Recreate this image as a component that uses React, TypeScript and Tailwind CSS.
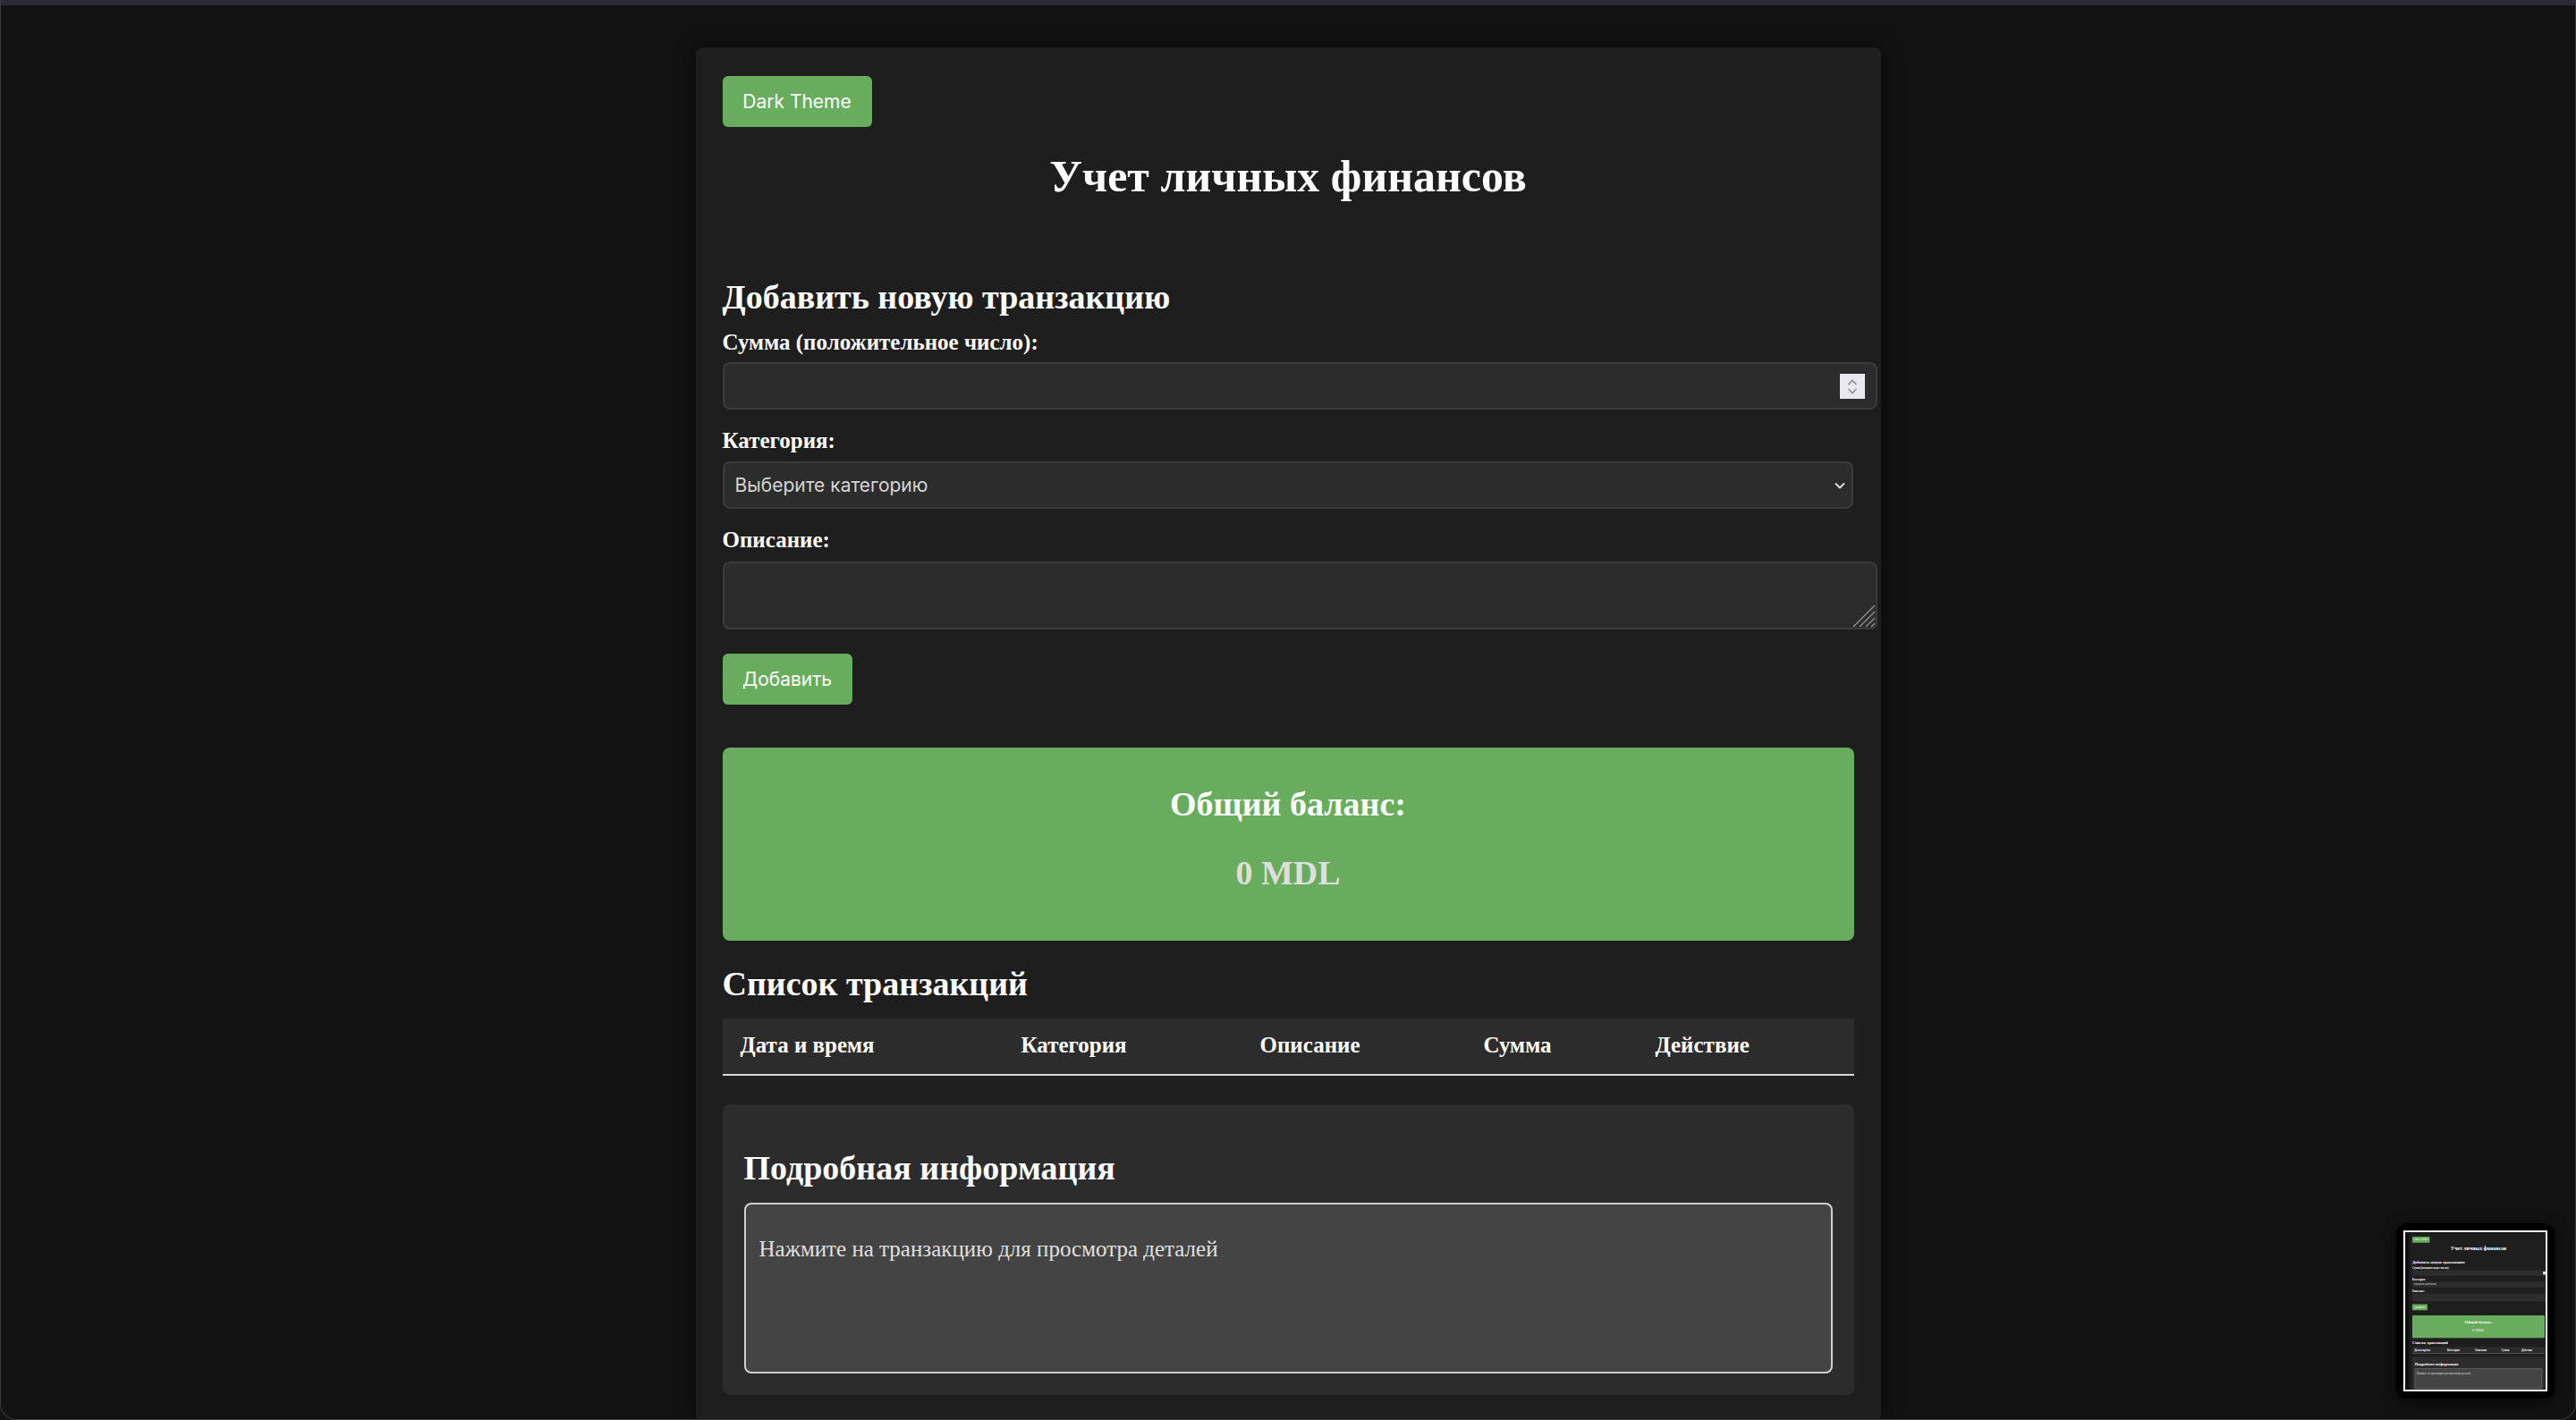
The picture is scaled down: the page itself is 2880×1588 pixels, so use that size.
import React from "react";

const serif = "font-['Liberation_Serif','Times_New_Roman',serif]";
const sans = "font-['Inter','Noto_Sans',sans-serif]";

function Spinner() {
  return (
    <div className="pointer-events-none absolute right-[12px] top-[11px] flex h-[28px] w-[28px] flex-col items-center justify-center gap-[3px] bg-[#e9e9ed]">
      <svg width="12" height="7" viewBox="0 0 12 7" fill="none">
        <polyline points="1.5,6 6,1.5 10.5,6" stroke="#8e8c9a" strokeWidth="1.6" />
      </svg>
      <svg width="12" height="7" viewBox="0 0 12 7" fill="none">
        <polyline points="1.5,1 6,5.5 10.5,1" stroke="#8e8c9a" strokeWidth="1.6" />
      </svg>
    </div>
  );
}

function ResizeGrip() {
  return (
    <svg className="pointer-events-none absolute bottom-[2px] right-[2px]" width="26" height="26" viewBox="0 0 26 26" fill="none">
      <line x1="25" y1="1" x2="1" y2="25" stroke="#8a8a8a" strokeWidth="1.5" />
      <line x1="25" y1="8" x2="8" y2="25" stroke="#8a8a8a" strokeWidth="1.5" />
      <line x1="25" y1="15" x2="15" y2="25" stroke="#8a8a8a" strokeWidth="1.5" />
      <line x1="25" y1="21" x2="21" y2="25" stroke="#8a8a8a" strokeWidth="1.5" />
    </svg>
  );
}

function FinancePanel() {
  return (
    <div className={`w-[1325px] shrink-0 rounded-[8px] bg-[#1e1e1e] px-[30px] pt-[32px] pb-[30px] text-white shadow-[0_0_24px_rgba(0,0,0,0.45)] ${serif}`}>
      <button className={`h-[57px] w-[167px] rounded-[6px] bg-[#68ad5e] text-[21px] text-white ${sans}`}>
        Dark Theme
      </button>

      <h1 className="mt-[30px] text-center text-[50px] font-bold leading-none">Учет личных финансов</h1>

      {/* form */}
      <h2 className="mt-[91px] text-[38px] font-bold leading-none">Добавить новую транзакцию</h2>

      <label className="mt-[19px] block text-[25px] font-bold leading-none">Сумма (положительное число):</label>
      <div className="relative mt-[10px] h-[53px] w-[1291px] rounded-[8px] border-2 border-[#3b3b3b] bg-[#2c2c2c]">
        <input type="number" className={`h-full w-full bg-transparent px-[12px] text-[21px] text-[#e0e0e0] outline-none ${sans}`} />
        <Spinner />
      </div>

      <label className="mt-[22px] block text-[25px] font-bold leading-none">Категория:</label>
      <div className="relative mt-[11px] h-[53px] w-[1264px] rounded-[8px] border-2 border-[#3b3b3b] bg-[#2c2c2c]">
        <select className={`h-full w-full appearance-none bg-transparent px-[12px] text-[21px] text-[#d4d4d4] outline-none ${sans}`}>
          <option>Выберите категорию</option>
        </select>
        <svg className="pointer-events-none absolute right-[7px] top-[21px]" width="12" height="8" viewBox="0 0 12 8" fill="none">
          <polyline points="1,1.5 6,6.5 11,1.5" stroke="#e6e6e6" strokeWidth="1.8" />
        </svg>
      </div>

      <label className="mt-[22px] block text-[25px] font-bold leading-none">Описание:</label>
      <div className="relative mt-[12px] h-[76px] w-[1291px]">
        <textarea className={`block h-full w-full resize-none rounded-[8px] border-2 border-[#3b3b3b] bg-[#2c2c2c] px-[12px] py-[8px] text-[21px] text-[#e0e0e0] outline-none ${sans}`} />
        <ResizeGrip />
      </div>

      <button className={`mt-[27px] block h-[57px] w-[145px] rounded-[6px] bg-[#68ad5e] text-[21px] text-white ${sans}`}>
        Добавить
      </button>

      {/* balance */}
      <div className="mt-[48px] h-[216px] rounded-[8px] bg-[#68ad5e] pt-[44px] text-center">
        <h2 className="text-[38px] font-bold leading-none">Общий баланс:</h2>
        <p className="mt-[39px] text-[38px] font-bold leading-none text-[#dedede]">0 MDL</p>
      </div>

      {/* list */}
      <h2 className="mt-[29px] text-[38px] font-bold leading-none">Список транзакций</h2>
      <div className="mt-[20px] grid h-[64px] grid-cols-[314px_267px_250px_192px_241px] border-b-2 border-[#d9d9d9] bg-[#2c2c2c] text-[25px] font-bold leading-none">
        {["Дата и время", "Категория", "Описание", "Сумма", "Действие"].map((h) => (
          <div key={h} className="pl-[20px] pt-[17px]">{h}</div>
        ))}
      </div>

      {/* details */}
      <div className="mt-[32px] h-[325px] rounded-[8px] bg-[#2c2c2c] px-[24px] pt-[52px]">
        <h2 className="text-[38px] font-bold leading-none">Подробная информация</h2>
        <div className="mt-[20px] h-[191px] rounded-[8px] border-2 border-[#cfcfcf] bg-[#444444] px-[15px] pt-[37px] text-[25px] leading-none text-[#e0e0e0]">
          Нажмите на транзакцию для просмотра деталей
        </div>
      </div>
    </div>
  );
}

export default function App() {
  return (
    <div className="relative h-[1588px] w-[2880px] overflow-hidden bg-[#121212]">
      <div className="h-[6px] bg-[#2b2a37]" />
      <div className="mt-[47px] flex justify-center">
        <FinancePanel />
      </div>

      {/* screenshot preview thumbnail */}
      <div className="absolute bottom-[24px] right-[24px] h-[196px] w-[177px] rounded-[12px] bg-black p-[8px] shadow-[0_4px_16px_rgba(0,0,0,0.6)]">
        <div className="h-[180px] w-[161px] overflow-hidden border-2 border-white bg-[#121212]">
          <div className="pointer-events-none h-[1538px] w-[1376px] origin-top-left scale-[0.117] pl-[38px] pt-[11px]">
            <FinancePanel />
          </div>
        </div>
      </div>

      <div className="pointer-events-none absolute inset-0 rounded-b-[18px] border-x border-b border-[#3a3a3a]" />
    </div>
  );
}
